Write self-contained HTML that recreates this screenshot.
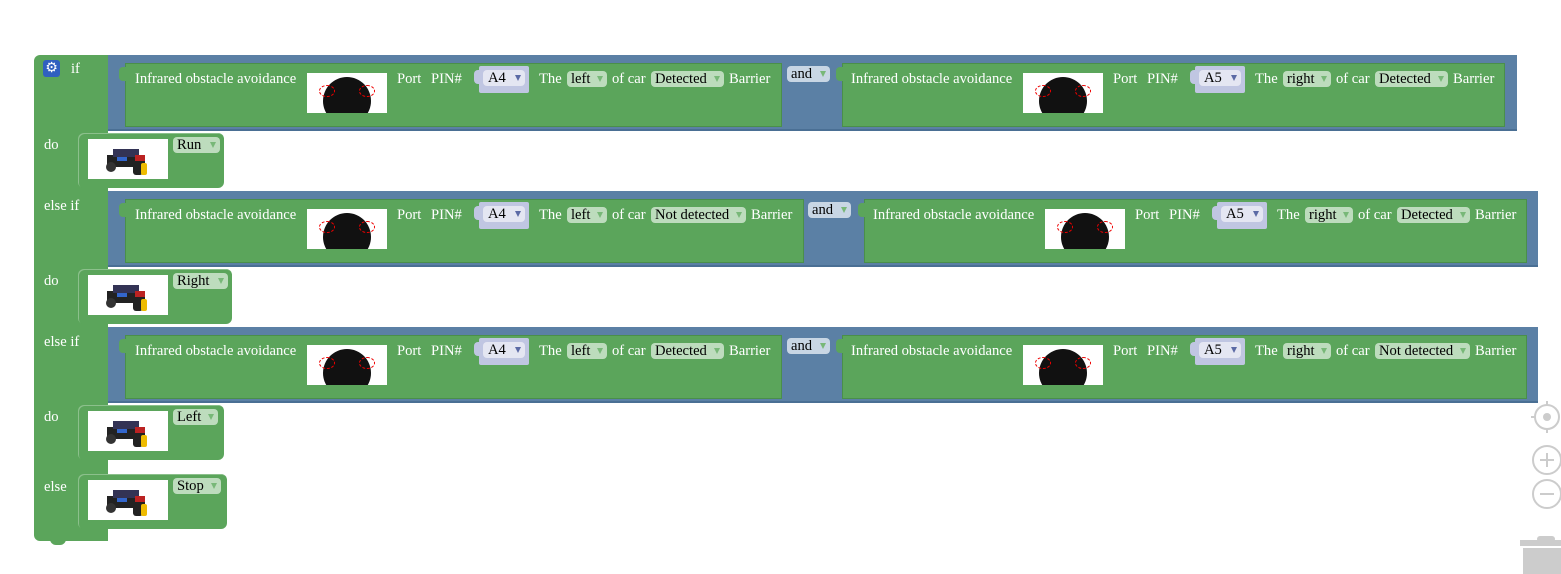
<!DOCTYPE html>
<html><head><meta charset="utf-8"><style>
body{margin:0;width:1561px;height:574px;background:#fff;position:relative;overflow:hidden;font-family:"Liberation Serif",serif;font-size:14px}
.a{position:absolute}
.g{background:#5ba55b}
.b{background:#5b80a5}
.t{position:absolute;color:#fff;white-space:nowrap;line-height:16px;font-size:14.6px}
.dd{position:absolute;height:16px;line-height:16px;background:#bddcbd;border-radius:4px;color:#000;padding-left:4px;box-sizing:border-box;white-space:nowrap;font-size:14.6px}
.dd:after{content:"";position:absolute;right:4px;top:5px;border-left:3.5px solid transparent;border-right:3.5px solid transparent;border-top:6px solid #78b878}
.pin{position:absolute;height:27px;background:#c0c6e2;border-radius:2px}
.pin .dd{background:#e4e6f2;left:4px;top:4px;width:42px;padding-left:5px}
.pin .dd:after{border-top-color:#5b6aa5}
.pin:before{content:"";position:absolute;left:-5px;top:4px;width:8px;height:14px;background:#c0c6e2;border-radius:4px 0 0 4px}
.img{position:absolute;width:80px;height:40px;background:#fff;overflow:hidden}
.board{position:absolute;left:16px;top:4px;width:48px;height:48px;border-radius:50%;background:#111}
.ring{position:absolute;width:14px;height:10px;border:1px dashed #e00;border-radius:50%;top:12px}
.car{position:absolute;left:15px;top:6px;width:48px;height:30px}
</style></head><body>
<div class="a g" style="left:34px;top:55px;width:74px;height:486px;border-radius:6px 0 0 6px"></div>
<div class="a g" style="left:50px;top:538px;width:16px;height:7px;border-radius:0 0 6px 6px"></div>
<div class="a" style="left:43px;top:60px;width:17px;height:17px;background:#3060c0;border-radius:3px;color:#fff;font-size:14px;line-height:17px;text-align:center;font-family:'DejaVu Sans'">⚙</div>
<div class="t" style="left:71px;top:61px">if</div>
<div class="t" style="left:44px;top:137px">do</div>
<div class="t" style="left:44px;top:198px">else if</div>
<div class="t" style="left:44px;top:273px">do</div>
<div class="t" style="left:44px;top:334px">else if</div>
<div class="t" style="left:44px;top:409px">do</div>
<div class="t" style="left:44px;top:479px">else</div>
<div id="root"></div>
<svg class="a" style="left:1515px;top:400px" width="46" height="174">
<g fill="none" stroke="#ccc" stroke-width="2">
<circle cx="32" cy="17" r="12"/><line x1="32" y1="1" x2="32" y2="5"/><line x1="32" y1="29" x2="32" y2="33"/><line x1="16" y1="17" x2="20" y2="17"/>
<circle cx="32" cy="17" r="4" fill="#ccc" stroke="none"/>
<circle cx="32" cy="60" r="14"/><line x1="25" y1="60" x2="39" y2="60"/><line x1="32" y1="53" x2="32" y2="67"/>
<circle cx="32" cy="94" r="14"/><line x1="25" y1="94" x2="39" y2="94"/></g>
<g fill="#ccc"><rect x="5" y="140" width="41" height="6"/><rect x="22" y="136" width="18" height="6" rx="3"/><rect x="8" y="148" width="38" height="30"/></g>
</svg>
<script>
var R=document.getElementById('root'),H='';
function el(s){H+=s}
function img(x,y){el('<div class="img" style="left:'+x+'px;top:'+y+'px"><div class="board"></div><div class="ring" style="left:12px"></div><div class="ring" style="left:52px"></div></div>')}
function car(x,y){el('<div class="img" style="left:'+x+'px;top:'+y+'px"><svg class="car" viewBox="0 0 48 30"><rect x="4" y="10" width="38" height="12" fill="#222"/><rect x="10" y="4" width="26" height="8" fill="#335"/><rect x="14" y="12" width="10" height="4" fill="#36c"/><rect x="32" y="10" width="10" height="6" fill="#b22"/><rect x="30" y="18" width="10" height="12" rx="3" fill="#222"/><rect x="38" y="18" width="6" height="12" rx="2" fill="#eb0"/><circle cx="8" cy="22" r="5" fill="#333"/></svg></div>')}
function t(x,y,s){el('<div class="t" style="left:'+x+'px;top:'+y+'px">'+s+'</div>')}
function dd(x,y,w,s){el('<div class="dd" style="left:'+x+'px;top:'+y+'px;width:'+w+'px">'+s+'</div>')}
function cond(T,y,end,side,sw,state,stw,start){
 el('<div class="a g" style="left:'+start+'px;top:'+(y+8)+'px;width:'+(end-start)+'px;height:64px;box-shadow:inset 0 0 0 1px #4a8f4a"></div>');
 el('<div class="a g" style="left:'+(start-6)+'px;top:'+(y+12)+'px;width:8px;height:14px;border-radius:4px 0 0 4px"></div>');
 var ty=y+16;
 t(T,ty,'Infrared obstacle avoidance');img(T+172,y+18);t(T+262,ty,'Port');t(T+296,ty,'PIN#');
 el('<div class="pin" style="left:'+(T+344)+'px;top:'+(y+11)+'px;width:50px"><div class="dd">A'+(side=='left'?4:5)+'</div></div>');
 t(T+404,ty,'The');dd(T+432,ty,sw,side);var x=T+432+sw+5;t(x,ty,'of car');x+=39;dd(x,ty,stw,state);t(x+stw+5,ty,'Barrier');
}
function row(y,bend,l,r){
 el('<div class="a b" style="left:108px;top:'+y+'px;width:'+(bend-108)+'px;height:76px;box-shadow:inset 0 -2px 0 #4a6f94"></div>');
 cond(135,y,l.end,'left',40,l.st,l.w,125);
 el('<div class="dd" style="left:'+l.and+'px;top:'+(y+11)+'px;width:43px;background:#c8d6e4">and</div>');
 cond(r.T,y,r.end,'right',48,r.st,r.w,r.T-9);
}
function stmt(y,w,lab,dw){
 el('<div class="a g" style="left:78px;top:'+y+'px;width:'+w+'px;height:55px;border-radius:6px;box-shadow:inset 1px 1px 0 #8cc08c"></div>');
 car(88,y+6);dd(173,y+4,dw,lab);
}
row(55,1517,{end:782,st:'Detected',w:73,and:787},{T:851,end:1505,st:'Detected',w:73});
stmt(133,146,'Run',47);
row(191,1538,{end:804,st:'Not detected',w:95,and:808},{T:873,end:1527,st:'Detected',w:73});
stmt(269,154,'Right',55);
row(327,1538,{end:782,st:'Detected',w:73,and:787},{T:851,end:1527,st:'Not detected',w:95});
stmt(405,146,'Left',45);
stmt(474,149,'Stop',48);
R.innerHTML=H;
</script>
</body></html>
